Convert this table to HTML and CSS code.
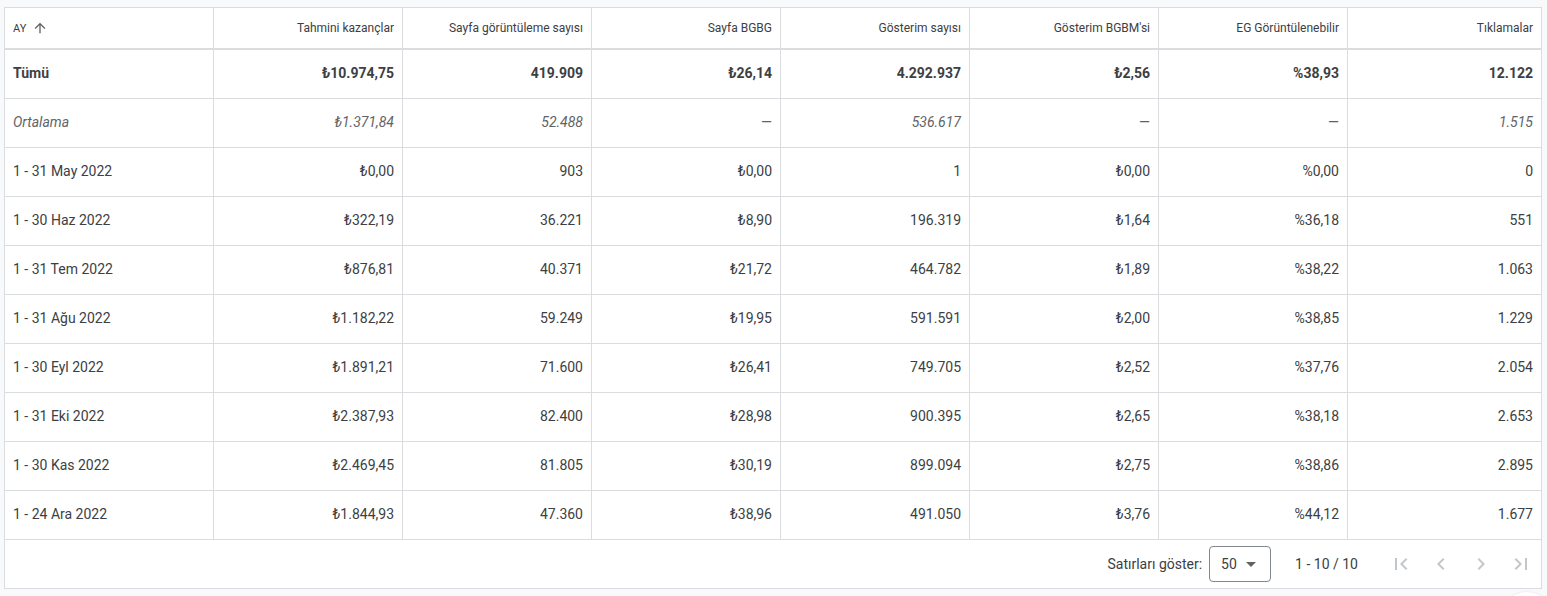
FILE: index.html
```html
<!DOCTYPE html>
<html lang="tr">
<head>
<meta charset="utf-8">
<title>Rapor</title>
<link rel="stylesheet" href="styles.css">
</head>
<body>
<div class="card">
  <div class="grid">
    <div class="cell th first"><span>AY</span>
      <svg class="sort" viewBox="0 0 24 24" width="16" height="16"><path d="M4 12l1.41 1.41L11 7.83V20h2V7.83l5.58 5.59L20 12l-8-8-8 8z"/></svg>
    </div>
    <div class="cell th">Tahmini kazançlar</div>
    <div class="cell th">Sayfa görüntüleme sayısı</div>
    <div class="cell th">Sayfa BGBG</div>
    <div class="cell th">Gösterim sayısı</div>
    <div class="cell th">Gösterim BGBM'si</div>
    <div class="cell th">EG Görüntülenebilir</div>
    <div class="cell th last">Tıklamalar</div>

    <div class="cell first bold">Tümü</div>
    <div class="cell bold">₺10.974,75</div>
    <div class="cell bold">419.909</div>
    <div class="cell bold">₺26,14</div>
    <div class="cell bold">4.292.937</div>
    <div class="cell bold">₺2,56</div>
    <div class="cell bold">%38,93</div>
    <div class="cell last bold">12.122</div>

    <div class="cell first avg">Ortalama</div>
    <div class="cell avg">₺1.371,84</div>
    <div class="cell avg">52.488</div>
    <div class="cell dash">—</div>
    <div class="cell avg">536.617</div>
    <div class="cell dash">—</div>
    <div class="cell dash">—</div>
    <div class="cell last avg">1.515</div>

    <div class="cell first">1 - 31 May 2022</div>
    <div class="cell">₺0,00</div>
    <div class="cell">903</div>
    <div class="cell">₺0,00</div>
    <div class="cell">1</div>
    <div class="cell">₺0,00</div>
    <div class="cell">%0,00</div>
    <div class="cell last">0</div>

    <div class="cell first">1 - 30 Haz 2022</div>
    <div class="cell">₺322,19</div>
    <div class="cell">36.221</div>
    <div class="cell">₺8,90</div>
    <div class="cell">196.319</div>
    <div class="cell">₺1,64</div>
    <div class="cell">%36,18</div>
    <div class="cell last">551</div>

    <div class="cell first">1 - 31 Tem 2022</div>
    <div class="cell">₺876,81</div>
    <div class="cell">40.371</div>
    <div class="cell">₺21,72</div>
    <div class="cell">464.782</div>
    <div class="cell">₺1,89</div>
    <div class="cell">%38,22</div>
    <div class="cell last">1.063</div>

    <div class="cell first">1 - 31 Ağu 2022</div>
    <div class="cell">₺1.182,22</div>
    <div class="cell">59.249</div>
    <div class="cell">₺19,95</div>
    <div class="cell">591.591</div>
    <div class="cell">₺2,00</div>
    <div class="cell">%38,85</div>
    <div class="cell last">1.229</div>

    <div class="cell first">1 - 30 Eyl 2022</div>
    <div class="cell">₺1.891,21</div>
    <div class="cell">71.600</div>
    <div class="cell">₺26,41</div>
    <div class="cell">749.705</div>
    <div class="cell">₺2,52</div>
    <div class="cell">%37,76</div>
    <div class="cell last">2.054</div>

    <div class="cell first">1 - 31 Eki 2022</div>
    <div class="cell">₺2.387,93</div>
    <div class="cell">82.400</div>
    <div class="cell">₺28,98</div>
    <div class="cell">900.395</div>
    <div class="cell">₺2,65</div>
    <div class="cell">%38,18</div>
    <div class="cell last">2.653</div>

    <div class="cell first">1 - 30 Kas 2022</div>
    <div class="cell">₺2.469,45</div>
    <div class="cell">81.805</div>
    <div class="cell">₺30,19</div>
    <div class="cell">899.094</div>
    <div class="cell">₺2,75</div>
    <div class="cell">%38,86</div>
    <div class="cell last">2.895</div>

    <div class="cell first">1 - 24 Ara 2022</div>
    <div class="cell">₺1.844,93</div>
    <div class="cell">47.360</div>
    <div class="cell">₺38,96</div>
    <div class="cell">491.050</div>
    <div class="cell">₺3,76</div>
    <div class="cell">%44,12</div>
    <div class="cell last">1.677</div>
  </div>
  <div class="footer">
    <span class="label">Satırları göster:</span>
    <div class="select"><span>50</span><span class="caret"></span></div>
    <span class="range">1 - 10 / 10</span>
    <div class="pager">
      <span class="pbtn"><svg viewBox="0 0 24 24" width="24" height="24"><path d="M18.41 16.59L13.82 12l4.59-4.59L17 6l-6 6 6 6zM6 6h2v12H6z"/></svg></span>
      <span class="pbtn"><svg viewBox="0 0 24 24" width="24" height="24"><path d="M15.41 7.41L14 6l-6 6 6 6 1.41-1.41L10.83 12z"/></svg></span>
      <span class="pbtn"><svg viewBox="0 0 24 24" width="24" height="24"><path d="M10 6L8.59 7.41 13.17 12l-4.58 4.59L10 18l6-6z"/></svg></span>
      <span class="pbtn"><svg viewBox="0 0 24 24" width="24" height="24"><path d="M5.59 7.41L10.18 12l-4.59 4.59L7 18l6-6-6-6zM16 6h2v12h-2z"/></svg></span>
    </div>
  </div>
</div>
<div class="fab-clip"><div class="fab"></div></div>
</body>
</html>
```

FILE: styles.css
```css
html, body {
  margin: 0;
  padding: 0;
}
html {
  overflow: hidden;
  height: 596px;
}
body {
  background: #f8f9fa;
  font-family: Roboto, "Liberation Sans", Arial, sans-serif;
  color: #3c4043;
  font-size: 14px;
  padding: 7px 0 0 4px;
  height: 596px;
  box-sizing: border-box;
  overflow: hidden;
  position: relative;
}
.card {
  width: 1538px;
  box-sizing: border-box;
  background: #fff;
  border: 1px solid #dadce0;
}
.grid {
  display: grid;
  grid-template-columns: 209px repeat(6, 189px) 1fr;
}
.cell {
  height: 49px;
  box-sizing: border-box;
  border-right: 1px solid #dadce0;
  border-bottom: 1px solid #dadce0;
  display: flex;
  align-items: center;
  justify-content: flex-end;
  padding: 0 8px 2px;
  white-space: nowrap;
  font-size: 14px;
  color: #3c4043;
}
.cell.first {
  justify-content: flex-start;
  padding-left: 8px;
}
.cell.last {
  border-right: none;
}
.th {
  height: 42px;
  padding-bottom: 0;
  border-bottom: 2px solid #dadce0;
  font-size: 12px;
  color: #3c4043;
}
.th.first span {
  font-size: 11px;
}
.sort {
  fill: #5f6368;
  margin-left: 6px;
}
.bold {
  font-weight: 700;
  color: #3c4043;
}
.avg {
  font-style: italic;
  color: #5f6368;
}
.dash {
  color: #5f6368;
}
.footer {
  height: 48px;
  display: flex;
  align-items: center;
  justify-content: flex-end;
  font-size: 14px;
  color: #3c4043;
}
.label {
  margin-right: 7px;
}
.select {
  width: 62px;
  height: 36px;
  box-sizing: border-box;
  border: 1px solid #80868b;
  border-radius: 4px;
  display: flex;
  align-items: center;
  padding-left: 11px;
}
.caret {
  width: 0;
  height: 0;
  border-left: 5px solid transparent;
  border-right: 5px solid transparent;
  border-top: 5px solid #5f6368;
  margin-left: 9px;
}
.range {
  margin-left: 24px;
  margin-right: 23px;
}
.pager {
  display: flex;
}
.pbtn {
  width: 40px;
  height: 40px;
  display: flex;
  align-items: center;
  justify-content: center;
}
.pbtn svg {
  fill: #c4c7c9;
}
.fab-clip {
  position: absolute;
  left: 1497px;
  top: 590px;
  width: 50px;
  height: 6px;
  overflow: hidden;
}
.fab {
  margin: 2px 0 0 2px;
  width: 56px;
  height: 56px;
  border-radius: 50%;
  background: #fff;
  box-shadow: 0 0 2px rgba(0,0,0,0.12);
}
```
